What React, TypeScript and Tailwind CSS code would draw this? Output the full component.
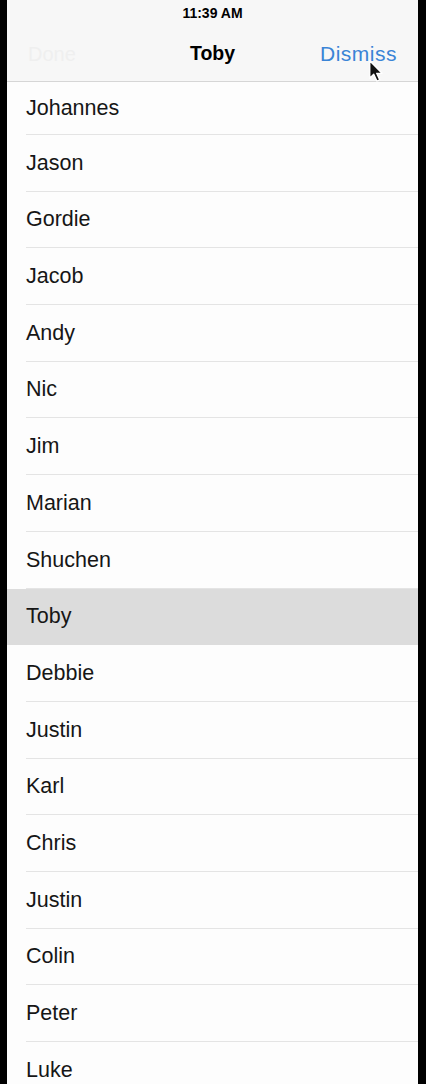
import React from "react";

const names = [
  "Johannes",
  "Jason",
  "Gordie",
  "Jacob",
  "Andy",
  "Nic",
  "Jim",
  "Marian",
  "Shuchen",
  "Toby",
  "Debbie",
  "Justin",
  "Karl",
  "Chris",
  "Justin",
  "Colin",
  "Peter",
  "Luke",
];

function Cursor() {
  return (
    <svg
      className="absolute left-[360px] top-[59px]"
      width="18"
      height="25"
      viewBox="0 0 14 22"
    >
      <path
        d="M1.5 1.5 L1.5 17 L5 13.5 L7.8 19.5 L10.3 18.4 L7.6 12.6 L12.3 12.6 Z"
        fill="#111"
        stroke="#fff"
        strokeWidth="1.2"
        strokeLinejoin="round"
      />
    </svg>
  );
}

function Row({ name, first, selected }: { name: string; first: boolean; selected: boolean }) {
  return (
    <div
      className={
        (first ? "h-[53px] " : "h-[56.7px] ") +
        (selected ? "bg-[#dcdcdc] " : "") +
        "shrink-0 pl-[19px]"
      }
    >
      <div
        className={
          "h-full flex items-center text-[21.5px] text-[#161616] border-b " +
          (selected ? "border-transparent" : "border-[#e4e4e4]")
        }
      >
        {name}
      </div>
    </div>
  );
}

export default function App() {
  return (
    <div
      className="w-[426px] h-[1084px] bg-black flex overflow-hidden"
      style={{ fontFamily: '"Liberation Sans", Arial, sans-serif' }}
    >
      <div className="ml-[7px] w-[411px] h-full bg-[#fdfdfd] flex flex-col relative overflow-hidden">
        <div className="bg-[#f7f7f7] border-b border-[#d6d6d6] shrink-0">
          <div className="h-[27px] flex items-center justify-center text-[14px] font-bold text-black">
            11:39 AM
          </div>
          <div className="h-[54px] flex items-center justify-between px-[21px]">
            <span className="text-[20px] text-[#efefef] w-[90px]">Done</span>
            <span className="text-[19.5px] font-bold text-black">Toby</span>
            <span className="text-[21px] text-[#3a84d6] tracking-[0.5px] w-[90px] text-right">
              Dismiss
            </span>
          </div>
        </div>
        {names.map((n, i) => (
          <Row key={i} name={n} first={i === 0} selected={n === "Toby"} />
        ))}
        <Cursor />
      </div>
    </div>
  );
}
